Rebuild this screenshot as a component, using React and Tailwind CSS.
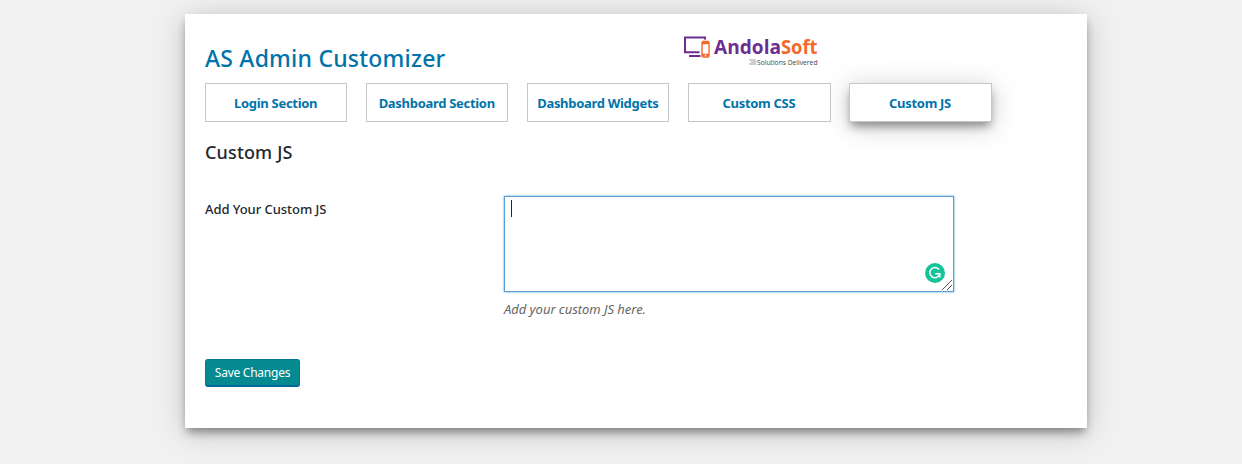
const tabs = ['Login Section', 'Dashboard Section', 'Dashboard Widgets', 'Custom CSS', 'Custom JS'];

function Logo() {
  return (
    <svg className="block h-[40px] w-[150px]" viewBox="0 0 150 40">
      <path d="M23 4.500V2.500H3v14.800h14.500" fill="none" stroke="#6d2d91" strokeWidth="2" />
      <path d="M7 21h11.500" stroke="#6d2d91" strokeWidth="2" />
      <rect x="20" y="6.500" width="7" height="15.500" rx="1.200" fill="#fff" stroke="#f26a2b" strokeWidth="1.400" />
      <path d="M20 8h7M20 20h7" stroke="#f26a2b" strokeWidth="2.600" />
      <circle cx="23.500" cy="20.300" r=".8" fill="#fff" />
      <text y="18.500" fontFamily="Open Sans, sans-serif" fontWeight="700" fontSize="19.500">
        <tspan x="32" fill="#6d2d91" textLength="67" lengthAdjust="spacingAndGlyphs">Andola</tspan>
        <tspan x="99" fill="#f26a2b" textLength="36.500" lengthAdjust="spacingAndGlyphs">Soft</tspan>
      </text>
      <path d="M67 25h7M69 27h5.500M67 29h7" stroke="#777" strokeWidth=".7" />
      <text x="75" y="29.500" fontFamily="Open Sans, sans-serif" fontSize="7.800" fill="#444" textLength="60.500" lengthAdjust="spacingAndGlyphs">Solutions Delivered</text>
    </svg>
  );
}

function AssistantBadge() {
  return (
    <svg className="absolute right-[8px] bottom-[8px] h-[20px] w-[20px]" viewBox="0 0 20 20">
      <circle cx="10" cy="10" r="10" fill="#15c39a" />
      <path d="M14 6.500A5.100 5.100 0 1 0 14.400 12.200" fill="none" stroke="#fff" strokeWidth="1.500" />
      <path d="M10.300 10.800h4.600v3.600" fill="none" stroke="#fff" strokeWidth="1.400" />
    </svg>
  );
}

export default function App() {
  return (
    <div className="flex h-[464px] justify-center overflow-hidden bg-[#f1f1f1] pl-[30px] pt-[14px] font-['Noto_Sans','Open_Sans',sans-serif]">
      <main className="h-[414px] w-[902px] bg-white px-[20px] shadow-[0_6px_9px_-2px_rgba(0,0,0,0.4),0_4px_28px_0_rgba(0,0,0,0.2)]">
        <header className="flex h-[69px]">
          <h1 className="w-[477px] pt-[28px] text-[23px] leading-[32px] font-medium tracking-[0.22px] whitespace-nowrap text-[#0073aa]">AS Admin Customizer</h1>
          <div className="pt-[21px]"><Logo /></div>
        </header>
        <nav className="flex gap-[18.8px]">
          {tabs.map((t, i) => (
            <a key={t} className={`flex h-[39px] w-[142.3px] items-center justify-center border border-[#c5c8cb] bg-white pt-[2px] pr-px text-[13px] font-bold tracking-[-0.3px] whitespace-nowrap text-[#0073aa] ${i === 4 ? 'shadow-[0_6px_9px_-2px_rgba(0,0,0,0.4),0_4px_28px_0_rgba(0,0,0,0.2)]' : ''}`}>{t}</a>
          ))}
        </nav>
        <h2 className="mt-[18px] text-[18px] leading-[24px] font-medium tracking-[0.15px] text-[#23282d]">Custom JS</h2>
        <div className="mt-[32px] flex">
          <label className="w-[299px] pt-[4px] text-[13px] leading-[18px] font-medium tracking-[-0.05px] text-[#23282d]">Add Your Custom JS</label>
          <div>
            <div className="relative h-[96px] w-[450px] border border-[#5b9dd9] bg-white pt-[3px] pl-[6px] shadow-[0_0_2px_rgba(30,140,190,0.8)]">
              <div className="h-[17px] w-px bg-[#23282d]" />
              <AssistantBadge />
              <svg className="absolute right-0 bottom-0 h-[12px] w-[12px]" viewBox="0 0 12 12">
                <path d="M1 11L11 1M6 11l5-5" stroke="#555" strokeWidth="1" />
              </svg>
            </div>
            <p className="mt-[7px] text-[13px] leading-[20px] tracking-[-0.04px] text-[#666] italic">Add your custom JS here.</p>
          </div>
        </div>
        <button className="mt-[40px] flex h-[28px] w-[95px] items-center justify-center rounded-[3px] border border-[#00799b] border-b-[#006799] bg-[#048a90] pb-px text-[12px] tracking-[-0.25px] whitespace-nowrap text-white shadow-[inset_0_-1px_0_#006799]">Save Changes</button>
      </main>
    </div>
  );
}
